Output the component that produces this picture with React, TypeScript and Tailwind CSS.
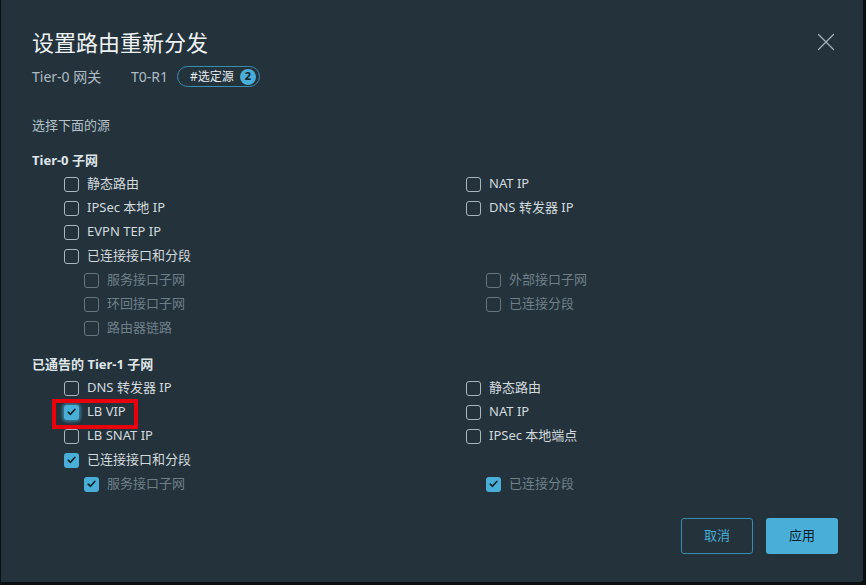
import { X } from 'lucide-react';

type Item = { label: string; checked?: boolean; disabled?: boolean; focus?: boolean; indent?: boolean };

const FONT = { fontFamily: '"Noto Sans", "Noto Sans CJK SC", sans-serif' };

function Checkbox({ checked, disabled, focus }: { checked?: boolean; disabled?: boolean; focus?: boolean }) {
  if (checked) {
    return (
      <span
        className={
          'flex h-[15px] w-[15px] shrink-0 items-center justify-center rounded-[3px] bg-[#49afd9]' +
          (focus ? ' shadow-[0_0_3px_2px_rgba(73,175,217,0.55)]' : '')
        }
      >
        <svg width="9" height="8" viewBox="0 0 9 8" fill="none">
          <path d="M1.2 4.2 L3.5 6.3 L7.8 1.5" stroke="#15232b" strokeWidth="1.7" strokeLinecap="round" strokeLinejoin="round" />
        </svg>
      </span>
    );
  }
  return (
    <span
      className={
        'h-[15px] w-[15px] shrink-0 rounded-[3px] border ' +
        (disabled ? 'border-[#65767f]' : 'border-[#a9b6bd]')
      }
    />
  );
}

function Row({ item }: { item: Item }) {
  return (
    <div className={'relative flex h-6 items-center gap-2 ' + (item.indent ? 'pl-5' : '')}>
      <Checkbox checked={item.checked} disabled={item.disabled} focus={item.focus} />
      <span className={'text-[13px] ' + (item.disabled ? 'text-[#6f8089]' : 'text-[#d3dade]')}>{item.label}</span>
      {item.focus && (
        <span className="absolute left-[-12px] top-[-1px] h-[30px] w-[86px] border-4 border-[#e8000b]" />
      )}
    </div>
  );
}

function Section({ title, left, right, className }: { title: string; left: Item[]; right: Item[]; className?: string }) {
  return (
    <section className={className}>
      <h3 className="h-[18px] text-[13px] font-bold leading-[18px] text-[#dfe5e8]">{title}</h3>
      <div className="mt-[3px] grid grid-cols-[402px_1fr] pl-8">
        <div>
          {left.map((it) => (
            <Row key={it.label} item={it} />
          ))}
        </div>
        <div>
          {right.map((it, i) =>
            it.label ? <Row key={it.label} item={it} /> : <div key={i} className="h-6" />
          )}
        </div>
      </div>
    </section>
  );
}

const tier0Left: Item[] = [
  { label: '静态路由' },
  { label: 'IPSec 本地 IP' },
  { label: 'EVPN TEP IP' },
  { label: '已连接接口和分段' },
  { label: '服务接口子网', indent: true, disabled: true },
  { label: '环回接口子网', indent: true, disabled: true },
  { label: '路由器链路', indent: true, disabled: true },
];

const tier0Right: Item[] = [
  { label: 'NAT IP' },
  { label: 'DNS 转发器 IP' },
  { label: '' },
  { label: '' },
  { label: '外部接口子网', indent: true, disabled: true },
  { label: '已连接分段', indent: true, disabled: true },
];

const tier1Left: Item[] = [
  { label: 'DNS 转发器 IP' },
  { label: 'LB VIP', checked: true, focus: true },
  { label: 'LB SNAT IP' },
  { label: '已连接接口和分段', checked: true },
  { label: '服务接口子网', indent: true, disabled: true, checked: true },
];

const tier1Right: Item[] = [
  { label: '静态路由' },
  { label: 'NAT IP' },
  { label: 'IPSec 本地端点' },
  { label: '' },
  { label: '已连接分段', indent: true, disabled: true, checked: true },
];

export default function App() {
  return (
    <div className="h-[585px] w-[866px] bg-[#0b1013]" style={FONT}>
      <div className="ml-px h-[582px] w-[862px] rounded-br-[3px] bg-[#23323b] pl-[31px] pr-[25px] pt-[28px]">
        <div className="flex h-[28px] items-center justify-between">
          <h1 className="text-[22px] leading-[28px] text-[#eef2f4]">设置路由重新分发</h1>
          <X className="mr-[-3px] h-[30px] w-[30px] text-[#a3b1b8]" strokeWidth={1} />
        </div>

        <div className="mt-[10px] flex h-[21px] items-center text-[14px] text-[#aebcc3]">
          <span className="w-[99px]">Tier-0 网关</span>
          <span>T0-R1</span>
          <span className="ml-[9px] flex h-[21px] items-center gap-[6px] rounded-full border border-[#3b8db0] pl-[12px] pr-[3px] text-[12px] text-[#e6ecef]">
            #选定源
            <span className="flex h-[16px] w-[16px] items-center justify-center rounded-full bg-[#49afd9] text-[11px] font-bold text-[#10202a]">
              2
            </span>
          </span>
        </div>

        <p className="mt-[29px] h-[18px] text-[13px] leading-[18px] text-[#b4c1c8]">选择下面的源</p>

        <Section className="mt-[17px]" title="Tier-0 子网" left={tier0Left} right={tier0Right} />
        <Section className="mt-[15px]" title="已通告的 Tier-1 子网" left={tier1Left} right={tier1Right} />

        <div className="mt-[22px] flex justify-end gap-[13px]">
          <button className="h-[36px] w-[72px] rounded-[3px] border border-[#3b8db0] text-[13px] text-[#49afd9]">
            取消
          </button>
          <button className="h-[36px] w-[72px] rounded-[3px] bg-[#49afd9] text-[13px] text-[#10202a]">
            应用
          </button>
        </div>
      </div>
    </div>
  );
}
